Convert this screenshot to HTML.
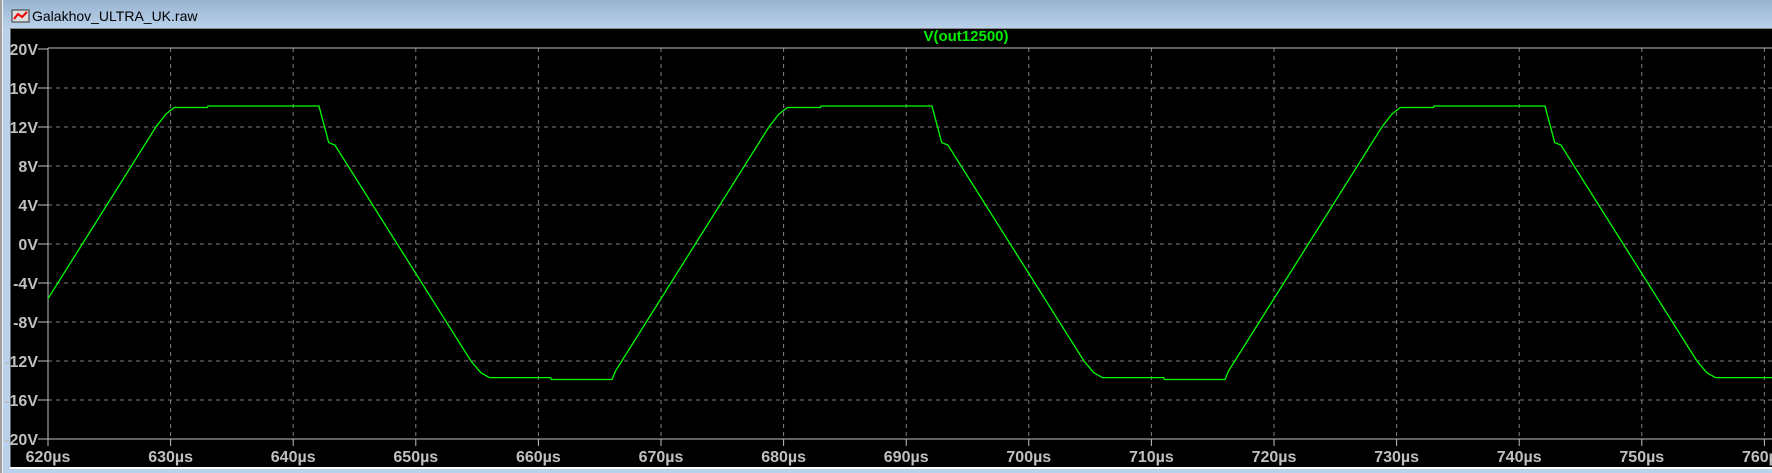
<!DOCTYPE html>
<html><head><meta charset="utf-8"><style>
html,body{margin:0;padding:0;width:1772px;height:473px;overflow:hidden;background:#b9d1ea;}
#tb{position:absolute;left:0;top:0;width:1772px;height:28px;background:linear-gradient(#99b4d1,#b9d1ea);}
#lf{position:absolute;left:0;top:0;width:2px;height:473px;background:#a0a0a0;}
#lf2{position:absolute;left:2px;top:0;width:1px;height:473px;background:#f0f0f0;}
#bl{position:absolute;left:10px;top:28px;width:1762px;height:439px;background:#000;border-top:1px solid #888;border-left:1px solid #666;}
#wl{position:absolute;left:10px;top:467px;width:1762px;height:2px;background:#fff;}
svg{position:absolute;left:0;top:0;}
text{font-family:"Liberation Sans",sans-serif;font-weight:bold;font-size:16px;fill:#c0c0c0;}
</style></head><body>
<div id="tb"></div><div id="lf"></div><div id="lf2"></div>
<div id="bl"></div><div id="wl"></div>
<svg width="1772" height="473" id="s">
<g transform="translate(12,10)"><rect x="0" y="0" width="17" height="12" fill="#ddd" stroke="#333"/><polyline points="2,9 6,4 10,7 15,2" fill="none" stroke="#e00" stroke-width="2"/></g>
<text x="32" y="21" style="font-weight:normal;font-size:14px;fill:#000">Galakhov_ULTRA_UK.raw</text>
<text x="966" y="41" text-anchor="middle" style="fill:#00ee00;font-size:15px">V(out12500)</text>
<g id="g"></g>
<polyline id="w" fill="none" stroke="#00ff00" stroke-width="1.3"/>
</svg>
<script>
var g=document.getElementById('g'),h='';
function X(t){return 48+(t-620)*12.26;}
function Y(v){return 244-9.75*v;}
for(var i=0;i<=10;i++){var v=20-4*i,y=Y(v);
 if(i>0&&i<10)h+='<line x1="48" y1="'+y+'" x2="1772" y2="'+y+'" stroke="#808080" stroke-dasharray="4,4"/>';
 h+='<line x1="38" y1="'+y+'" x2="48" y2="'+y+'" stroke="#c0c0c0"/>';
 h+='<text x="38" y="'+(y+6)+'" text-anchor="end">'+v+'V</text>';}
for(var k=0;k<=14;k++){var x=X(620+10*k);
 if(k>0)h+='<line x1="'+x+'" y1="48" x2="'+x+'" y2="439" stroke="#808080" stroke-dasharray="4,4"/>';
 h+='<line x1="'+x+'" y1="439" x2="'+x+'" y2="446" stroke="#c0c0c0"/>';
 h+='<text x="'+x+'" y="462" text-anchor="middle">'+(620+10*k)+'µs</text>';}
h+='<line x1="48" y1="48" x2="1772" y2="48" stroke="#c0c0c0"/><line x1="48" y1="439" x2="1772" y2="439" stroke="#c0c0c0"/><line x1="48" y1="48" x2="48" y2="439" stroke="#c0c0c0"/>';
g.innerHTML=h;
var K=[[0,-13.9],[0.3,-13],[12.8,12],[13.6,13.3],[14.3,14],[17,14],[17.01,14.15],[26.1,14.15],[26.9,10.4],[27.4,10.15],[38.5,-12],[39.3,-13.2],[40,-13.7],[45,-13.7],[45.01,-13.9],[50,-13.9]];
function V(t){var tt=((t-616)%50+50)%50;for(var i=1;i<K.length;i++){if(tt<=K[i][0]){var a=K[i-1],b=K[i];return a[1]+(b[1]-a[1])*(tt-a[0])/(b[0]-a[0]);}}return -13.9;}
var p=[];for(var t=620;t<=764;t+=0.05)p.push(X(t).toFixed(1)+','+Y(V(t)).toFixed(1));
document.getElementById('w').setAttribute('points',p.join(' '));
</script>
</body></html>
